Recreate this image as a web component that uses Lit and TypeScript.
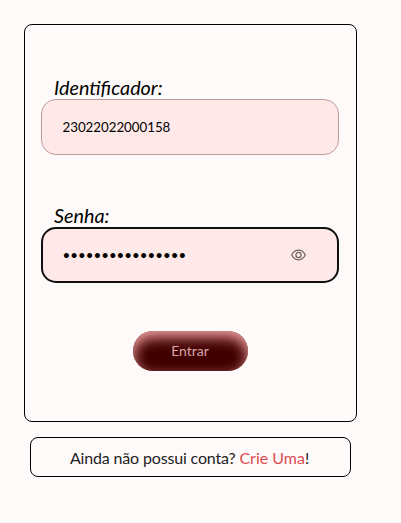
import { LitElement, html, css, svg } from "lit";
import { customElement, property } from "lit/decorators.js";

const eye = svg`<path d="M.7 6C2.4 2.500 4.800 1.200 7.500 1.200s5.100 1.300 6.800 4.800c-1.700 3.500-4.100 4.800-6.800 4.800S2.400 9.500.7 6Z"/><circle cx="7.500" cy="6" r="2.600"/>`;

@customElement("login-field")
export class LoginField extends LitElement {
  @property() label = "";
  @property() type = "text";
  @property() value = "";

  static styles = css`
    :host { display: block; }
    label {
      display: block; padding-left: 13px; color: #000;
      font: italic 19.800px/24px Lato, sans-serif;
    }
    .box {
      box-sizing: border-box; height: 56px; display: flex; align-items: center;
      padding: 0 32px 0 20.500px; border: 1px solid #bf9a9b; border-radius: 15px; background: #ffe9e8;
    }
    .box.active { border: 2px solid #101010; padding: 0 31px 0 19.500px; }
    input {
      flex: 1; min-width: 0; padding: 0; border: 0; outline: 0; background: none;
      font: 13.333px/16px Lato, sans-serif; letter-spacing: -0.03px; color: #000;
    }
    .active input { letter-spacing: 0; }
    svg { width: 15px; height: 12px; flex: none; fill: none; stroke: #6b6161; stroke-width: 1.2; }
  `;

  render() {
    const secret = this.type === "password";
    return html`
      <label for="field">${this.label}</label>
      <div class="box ${secret ? "active" : ""}">
        <input id="field" type=${this.type} .value=${this.value} />
        ${secret ? html`<svg viewBox="0 0 15 12">${eye}</svg>` : ""}
      </div>
    `;
  }
}

@customElement("app-root")
export class AppRoot extends LitElement {
  static styles = css`
    :host {
      display: block; box-sizing: border-box; min-height: 523px; padding: 24px;
      background: #fffafa; font-family: Lato, sans-serif;
    }
    .card {
      box-sizing: border-box; width: 333px; height: 398px; padding: 50px 17px 0 16px;
      border: 1px solid #000; border-radius: 8px; display: flex; flex-direction: column; gap: 48px;
    }
    button {
      align-self: center; width: 115px; height: 40px; padding: 0 0 2px; border: 0; border-radius: 20px;
      background: #400000; color: #d9a5a5; font: 14px Lato, sans-serif;
      box-shadow: inset 0 6px 14px #f5a2a2;
    }
    .signup {
      box-sizing: border-box; width: 321px; height: 40px; margin: 15px 0 0 6px; padding-right: 2px;
      border: 1px solid #000; border-radius: 8px; display: flex; align-items: center;
      justify-content: center; font-size: 16px; letter-spacing: -0.16px; color: #222; white-space: pre;
    }
    a { color: #dc4b4f; text-decoration: none; letter-spacing: 0; }
  `;

  render() {
    return html`
      <form class="card">
        <login-field label="Identificador:" value="23022022000158"></login-field>
        <login-field label="Senha:" type="password" value="abcdefghijklmnop"></login-field>
        <button type="button">Entrar</button>
      </form>
      <div class="signup">Ainda não possui conta? <a>Crie Uma</a>!</div>
    `;
  }
}
